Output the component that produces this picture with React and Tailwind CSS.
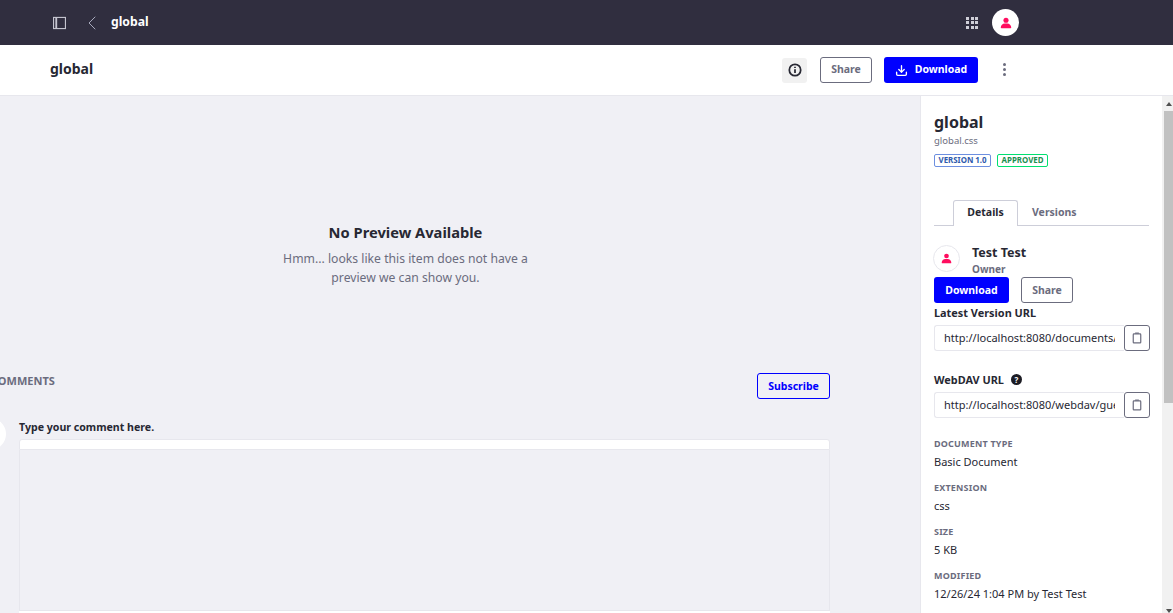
import React from "react";
import { ChevronLeft, Download } from "lucide-react";

const UserIcon = ({ className }) => (
  <svg viewBox="0 0 16 16" className={className} fill="#ff0d5f">
    <circle cx="8" cy="4.400" r="3.400" />
    <path d="M2 15c-.6 0-1-.4-1-1 0-3.100 2.500-5.400 5.400-5.400h3.200c2.900 0 5.400 2.300 5.400 5.400 0 .6-.4 1-1 1z" />
  </svg>
);

const CopyIcon = () => (
  <svg viewBox="0 0 16 16" className="w-[12px] h-[14px]" fill="none" stroke="#6b6c7e" strokeWidth="1.600">
    <rect x="3" y="2.500" width="10" height="12" rx="1" />
    <path d="M5.500 1.500h5" />
  </svg>
);

const UrlField = ({ url }) => (
  <div className="flex w-[216px] h-[26px]">
    <div className="w-[190px] border border-[#e7e7ed] border-r-0 rounded-l-[3px] pl-[9px] text-[11px] leading-[24px] text-[#272833]">
      <div className="w-[171px] overflow-hidden whitespace-nowrap">{url}</div>
    </div>
    <div className="w-[26px] border border-[#6b6c7e] rounded-[3px] flex items-center justify-center">
      <CopyIcon />
    </div>
  </div>
);

const Meta = ({ label, value, className }) => (
  <div className={className}>
    <div className="text-[9px] leading-[12px] font-bold tracking-[0.2px] text-[#6b6c7e]">{label}</div>
    <div className="mt-[4px] text-[11px] leading-[16px] text-[#272833]">{value}</div>
  </div>
);

export default function App() {
  return (
    <div className="h-[613px] w-[1173px] overflow-hidden flex flex-col font-['Noto_Sans',sans-serif] text-[#272833] bg-white">
      <div className="h-[45px] shrink-0 bg-[#302e3f] flex items-center pl-[53px] pr-[154px]">
        <svg viewBox="0 0 14 14" className="w-[13px] h-[14px]" fill="none" stroke="#c5c5d0" strokeWidth="1.200">
          <rect x="0.600" y="1" width="12.800" height="12" />
          <path d="M3.500 1v12" strokeWidth="2" />
        </svg>
        <ChevronLeft className="ml-[14px] w-[24px] h-[24px] text-[#a7a9bc]" strokeWidth={1} />
        <span className="ml-[7px] text-[12.200px] font-bold text-white">global</span>
        <div className="ml-auto grid grid-cols-3 gap-[1.500px]">
          {Array.from({ length: 9 }).map((_, i) => (
            <span key={i} className="w-[3px] h-[3px] bg-[#cfcfd8]" />
          ))}
        </div>
        <div className="ml-[14px] w-[27px] h-[27px] rounded-full bg-white flex items-center justify-center">
          <UserIcon className="w-[12px] h-[12px]" />
        </div>
      </div>

      <div className="h-[51px] shrink-0 border-b border-[#e7e7ed] flex items-center pl-[50px] pr-[167px]">
        <span className="text-[14px] font-bold -mt-[3px]">global</span>
        <div className="ml-auto w-[25px] h-[25px] rounded-[3px] bg-[#f1f1f1] flex items-center justify-center">
          <svg viewBox="0 0 16 16" className="w-[14px] h-[14px]" fill="none" stroke="#272833" strokeWidth="2">
            <circle cx="8" cy="8" r="6.500" />
            <path d="M8 7v4.500M8 4.200v1.600" />
          </svg>
        </div>
        <button className="ml-[13px] w-[52px] h-[26px] border border-[#6b6c7e] rounded-[3px] text-[10.500px] font-bold text-[#6b6c7e]">
          Share
        </button>
        <button className="ml-[12px] w-[94px] h-[26px] bg-[#0000ff] rounded-[3px] text-[10.500px] font-bold text-white flex items-center justify-center gap-[7px]">
          <Download className="w-[13px] h-[13px]" strokeWidth={2.500} />
          Download
        </button>
        <div className="ml-[25px] -mt-[1px] flex flex-col gap-[2px]">
          <span className="w-[3px] h-[3px] rounded-full bg-[#6b6c7e]" />
          <span className="w-[3px] h-[3px] rounded-full bg-[#6b6c7e]" />
          <span className="w-[3px] h-[3px] rounded-full bg-[#6b6c7e]" />
        </div>
      </div>

      <div className="flex-1 flex min-h-0">
        <div className="w-[920px] shrink-0 bg-[#f0f0f5] overflow-hidden">
          <div className="flex flex-col items-center w-[811px] pt-[125px]">
            <div className="text-[14.700px] leading-[22px] font-bold">No Preview Available</div>
            <div className="mt-[6px] w-[272px] text-center text-[12.200px] leading-[19px] text-[#6b6c7e]">
              Hmm... looks like this item does not have a preview we can show you.
            </div>
          </div>
          <div className="mt-[86px] -ml-[9px] w-[839px] flex items-center justify-between">
            <span className="text-[11px] font-bold text-[#6b6c7e] mb-[10px]">COMMENTS</span>
            <button className="w-[73px] h-[26px] pt-[1px] border border-[#0000ff] rounded-[3px] text-[10.500px] font-bold text-[#0000ff]">
              Subscribe
            </button>
          </div>
          <div className="mt-[19px] -ml-[26px] flex gap-[13px]">
            <div className="w-[32px] h-[32px] rounded-full bg-white mt-[-1px] shrink-0" />
            <div className="w-[811px]">
              <div className="text-[10.600px] leading-[16px] font-bold">Type your comment here.</div>
              <div className="mt-[4px] rounded-t-[3px] border border-[#e7e7ed] bg-white h-[11px]" />
              <div className="border-x border-b border-[#e7e7ed] h-[161px]" />
              <div className="bg-white h-[20px]" />
            </div>
          </div>
        </div>

        <div className="flex-1 flex min-w-0 border-l border-[#e7e7ed]">
          <div className="flex-1 pl-[13px] pt-[14px] min-w-0">
            <div className="text-[16px] leading-[24px] font-bold">global</div>
            <div className="text-[9.500px] leading-[14px] text-[#6b6c7e]">global.css</div>
            <div className="mt-[6px] flex gap-[6px]">
              <span className="h-[13px] px-[3.500px] border border-[#6d8fe0] rounded-[2px] text-[7.900px] leading-[11px] font-bold text-[#2e5aac]">
                VERSION 1.0
              </span>
              <span className="h-[13px] px-[3.500px] border border-[#00e070] rounded-[2px] text-[7.900px] leading-[11px] font-bold text-[#1b8f4f]">
                APPROVED
              </span>
            </div>
            <div className="mt-[33px] w-[215px] h-[26px] border-b border-[#cdced9] flex pl-[19px]">
              <div className="w-[65px] h-[26px] border border-b-0 border-[#cdced9] rounded-t-[3px] bg-white text-center text-[10.500px] leading-[22px] font-bold">
                Details
              </div>
              <div className="ml-[14px] text-[10.500px] leading-[24px] font-bold text-[#6b6c7e]">Versions</div>
            </div>
            <div className="mt-[19px] flex">
              <div className="w-[27px] h-[27px] -ml-[1px] rounded-full border border-[#e7e7ed] flex items-center justify-center">
                <UserIcon className="w-[11px] h-[11px]" />
              </div>
              <div className="ml-[12px]">
                <div className="text-[12.500px] leading-[15px] font-bold">Test Test</div>
                <div className="mt-[2px] text-[10px] leading-[14px] font-bold text-[#6b6c7e]">Owner</div>
              </div>
            </div>
            <div className="mt-[1px] flex gap-[12px]">
              <button className="w-[75px] h-[26px] pt-[1px] bg-[#0000ff] rounded-[3px] text-[10.500px] font-bold text-white">
                Download
              </button>
              <button className="w-[52px] h-[26px] pt-[1px] border border-[#6b6c7e] rounded-[3px] text-[10.500px] font-bold text-[#6b6c7e]">
                Share
              </button>
            </div>
            <div className="mt-[2px] text-[10.900px] leading-[16px] font-bold">Latest Version URL</div>
            <div className="mt-[4px]">
              <UrlField url="http://localhost:8080/documents/portal/guest" />
            </div>
            <div className="mt-[21px] flex items-center gap-[7px] text-[10.900px] leading-[16px] font-bold">
              WebDAV URL
              <span className="w-[11px] h-[11px] -mt-[2px] rounded-full bg-[#1c1c24] text-white text-[8px] leading-[11px] text-center">?</span>
            </div>
            <div className="mt-[4px]">
              <UrlField url="http://localhost:8080/webdav/guest/document" />
            </div>
            <Meta className="mt-[20px]" label="DOCUMENT TYPE" value="Basic Document" />
            <Meta className="mt-[12px]" label="EXTENSION" value="css" />
            <Meta className="mt-[12px]" label="SIZE" value="5 KB" />
            <Meta className="mt-[12px]" label="MODIFIED" value="12/26/24 1:04 PM by Test Test" />
          </div>
          <div className="w-[11px] shrink-0 bg-[#f1f1f1] pl-[2px] flex flex-col">
            <div className="h-[15px] pt-[6px] flex justify-center">
              <span className="w-0 h-0 border-x-[3px] border-x-transparent border-b-[4px] border-b-[#505050]" />
            </div>
            <div className="h-[292px] bg-[#c1c1c1]" />
            <div className="mt-auto h-[4px] flex justify-center">
              <span className="w-0 h-0 border-x-[3px] border-x-transparent border-t-[4px] border-t-[#505050]" />
            </div>
          </div>
        </div>
      </div>
    </div>
  );
}
